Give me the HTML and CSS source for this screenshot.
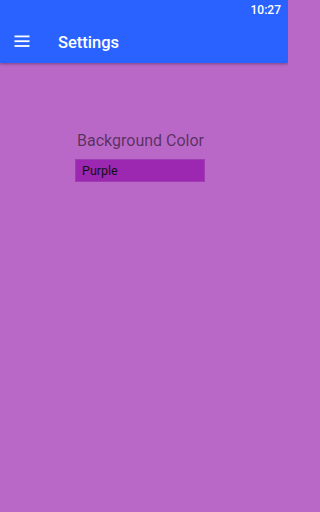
FILE: index.html
```html
<!DOCTYPE html>
<html>
<head>
<meta charset="utf-8">
<link rel="stylesheet" href="styles.css">
</head>
<body>
<header class="appbar">
  <div class="status"><span class="time">10:27</span></div>
  <div class="toolbar">
    <svg class="menu" width="18" height="18" viewBox="0 0 18 18"><rect x="1.5" y="3.5" width="15" height="1.8" fill="#fff"/><rect x="1.5" y="8.3" width="15" height="1.8" fill="#fff"/><rect x="1.5" y="13.1" width="15" height="1.8" fill="#fff"/></svg>
    <span class="title">Settings</span>
  </div>
</header>
<main class="content">
  <div class="setting">
    <div class="label">Background Color</div>
    <div class="select">Purple</div>
  </div>
</main>
</body>
</html>
```
FILE: styles.css
```css
html { background: #BA68C8; }
html, body { margin: 0; padding: 0; }
body {
  width: 288px;
  height: 512px;
  background: #BA68C8;
  font-family: Roboto, "Noto Sans", sans-serif;
  overflow: hidden;
}
.appbar {
  background: #2962FF;
  box-shadow: 0 1px 3px rgba(0,0,0,0.35);
  position: relative;
  z-index: 1;
}
.status {
  height: 19px;
  display: flex;
  justify-content: flex-end;
  align-items: center;
  padding-right: 7px;
}
.time {
  color: #fff;
  font-size: 12px;
  font-weight: 500;
}
.toolbar {
  height: 44px;
  display: flex;
  align-items: center;
  padding-left: 13px;
}
.menu { display: block; }
.title {
  color: #fff;
  font-size: 16.5px;
  font-weight: 500;
  margin-left: 27px;
  padding-top: 2px;
}
.content {
  display: flex;
  padding-top: 68px;
  padding-left: 75px;
}
.setting {
  display: flex;
  flex-direction: column;
  width: 130px;
}
.label {
  color: rgba(0,0,0,0.54);
  font-size: 16px;
  padding-left: 2px;
  line-height: 20px;
}
.select {
  margin-top: 8px;
  height: 21px;
  background: #9C27B0;
  border: 1px solid #A13DB3;
  color: #111;
  font-size: 12.5px;
  line-height: 21px;
  padding-left: 6px;
}
```
